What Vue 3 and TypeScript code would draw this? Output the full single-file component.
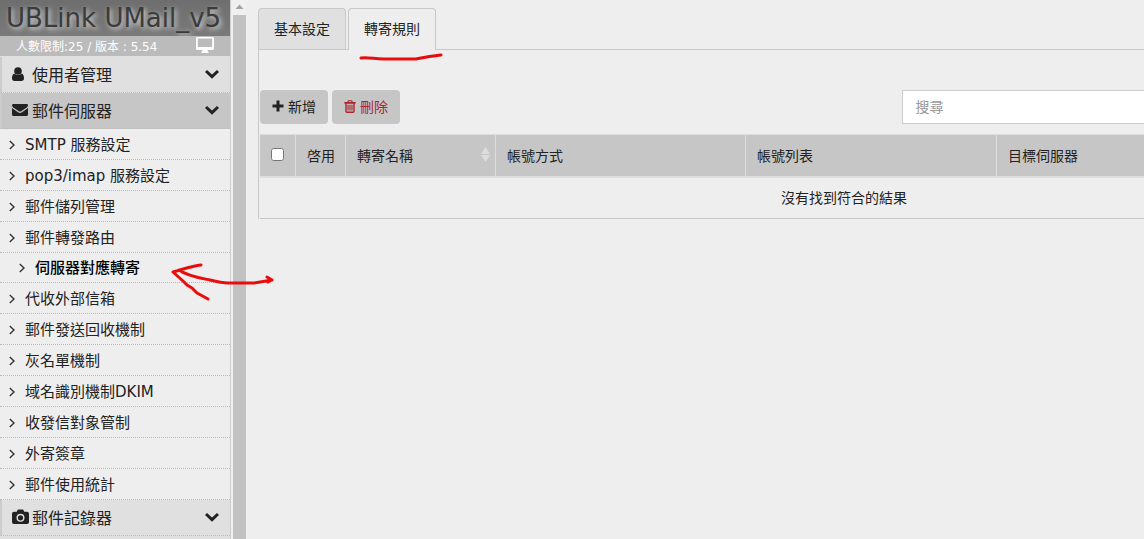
<script setup lang="ts">
import { ref } from 'vue'

interface Entry { label: string; child?: boolean }
interface Column { label: string; sortable?: boolean; cls: string }

const entries: Entry[] = [
  { label: 'SMTP 服務設定' },
  { label: 'pop3/imap 服務設定' },
  { label: '郵件儲列管理' },
  { label: '郵件轉發路由' },
  { label: '伺服器對應轉寄', child: true },
  { label: '代收外部信箱' },
  { label: '郵件發送回收機制' },
  { label: '灰名單機制' },
  { label: '域名識別機制DKIM' },
  { label: '收發信對象管制' },
  { label: '外寄簽章' },
  { label: '郵件使用統計' },
]

const columns: Column[] = [
  { label: '啓用', cls: 'c-on' },
  { label: '轉寄名稱', cls: 'c-name', sortable: true },
  { label: '帳號方式', cls: 'c-mode' },
  { label: '帳號列表', cls: 'c-list' },
  { label: '目標伺服器', cls: 'c-target' },
]

const tabs = ['基本設定', '轉寄規則']
const active = ref(1)
const keyword = ref('')
const allChecked = ref(false)
</script>

<template>
  <div class="page">
    <aside class="sidebar">
      <h1 class="brand">UBLink UMail_v5</h1>
      <div class="status">
        <span>人數限制:25 / 版本 : 5.54</span>
        <svg class="monitor" viewBox="0 0 18 16" aria-hidden="true">
          <path fill="#fff" fill-rule="evenodd" d="M1.500 0h15A1.500 1.500 0 0 1 18 1.500v10a1.500 1.500 0 0 1-1.500 1.500H11.500v1l1 .7V16h-7v-1.300l1-.7v-1h-5A1.500 1.500 0 0 1 0 11.500v-10A1.500 1.500 0 0 1 1.500 0zM1.800 1.600v8.400h14.400V1.600z" />
        </svg>
      </div>
      <nav class="nav">
        <button class="section" type="button">
          <svg class="sec-icon" viewBox="0 0 18 16" aria-hidden="true">
            <circle cx="6" cy="5" r="3.800" />
            <path d="M2.500 7.500C.7 8 0 9.800 0 12.200 0 14 1 15 2.500 15h7c1.500 0 2.500-1 2.500-2.800 0-2.400-.7-4.200-2.500-4.700-1 1-2.200 1.500-3.500 1.500S3.500 8.500 2.500 7.500z" />
          </svg>
          <span>使用者管理</span>
          <svg class="chevron" viewBox="0 0 14 10" aria-hidden="true"><path d="M1 2 7 7.700 13 2" /></svg>
        </button>
        <button class="section current" type="button">
          <svg class="sec-icon" viewBox="0 0 18 16" aria-hidden="true">
            <path d="M0 3.500C0 2.500.6 2 1.500 2h13c.9 0 1.500.5 1.500 1.400 0 .8-.6 1.500-1.300 2L9.500 9c-1 .7-2 .7-3 0L1.300 5.400C.6 4.900 0 4.200 0 3.500z" />
            <path d="M0 6 6 10.200c1.400.9 2.600.9 4 0L16 6v6.500c0 .9-.6 1.500-1.500 1.500h-13C.6 14 0 13.400 0 12.500z" />
          </svg>
          <span>郵件伺服器</span>
          <svg class="chevron" viewBox="0 0 14 10" aria-hidden="true"><path d="M1 2 7 7.700 13 2" /></svg>
        </button>
        <ul class="menu">
          <li v-for="e in entries" :key="e.label" :class="{ child: e.child }">
            <a href="#">
              <svg class="angle" viewBox="0 0 6 10" aria-hidden="true"><path d="M.8 1 5 5 .8 9" /></svg>
              <span>{{ e.label }}</span>
            </a>
          </li>
        </ul>
        <button class="section" type="button">
          <svg class="sec-icon" viewBox="0 0 18 16" aria-hidden="true">
            <path fill-rule="evenodd" d="M2 2.800h2.800l.6-1.600Q5.700.5 6.500.5h4q.8 0 1.100.7l.6 1.600H15a2 2 0 0 1 2 2V13a2 2 0 0 1-2 2H2a2 2 0 0 1-2-2V4.800a2 2 0 0 1 2-2zM8.500 4.800a4 4 0 1 0 0 8 4 4 0 0 0 0-8zm0 1.400a2.600 2.600 0 1 1 0 5.200 2.600 2.600 0 0 1 0-5.200z" />
          </svg>
          <span>郵件記錄器</span>
          <svg class="chevron" viewBox="0 0 14 10" aria-hidden="true"><path d="M1 2 7 7.700 13 2" /></svg>
        </button>
      </nav>
    </aside>

    <div class="scroll" aria-hidden="true">
      <svg viewBox="0 0 13 15"><path fill="#a3a3a3" d="M6.500 4.500 10.500 9h-8z" /></svg>
      <div class="thumb"></div>
    </div>

    <main class="main">
      <div class="tabs" role="tablist">
        <button v-for="(t, i) in tabs" :key="t" type="button" role="tab" class="tab" :class="{ active: i === active }" :aria-selected="i === active" @click="active = i">{{ t }}</button>
      </div>
      <section class="panel">
        <div class="toolbar">
          <button class="btn" type="button">
            <svg width="12" height="12" viewBox="0 0 12 12" aria-hidden="true"><path d="M4.500.5h3v4h4v3h-4v4h-3v-4h-4v-3h4z" /></svg>
            <span>新增</span>
          </button>
          <button class="btn danger" type="button">
            <svg width="12" height="13" viewBox="0 0 12 13" aria-hidden="true">
              <path fill-rule="evenodd" d="M4 .3h4l.8 1.700h2.900v1.500h-1V11c0 1-.6 1.900-1.500 1.900H2.800c-.9 0-1.500-.9-1.500-1.900V3.500h-1V2h2.900zM4.700 1.300l-.3.700h3.200l-.3-.7zM2.700 3.700v7.700h6.600V3.700zM3.500 4.800h1.100v5.600H3.500zM5.450 4.800h1.100v5.600h-1.100zM7.400 4.800h1.100v5.600H7.400z" />
            </svg>
            <span>刪除</span>
          </button>
          <input v-model="keyword" class="search" type="text" placeholder="搜尋" aria-label="搜尋">
        </div>
        <table class="grid">
          <thead>
            <tr>
              <th class="c-check"><input v-model="allChecked" type="checkbox" aria-label="全選"></th>
              <th v-for="c in columns" :key="c.label" :class="c.cls">
                <div class="th">
                  <span>{{ c.label }}</span>
                  <svg v-if="c.sortable" width="9" height="15" viewBox="0 0 9 15" aria-hidden="true"><path fill="#ddd" d="M4.500 0 9 7H0zM0 8h9l-4.500 7z" /></svg>
                </div>
              </th>
            </tr>
          </thead>
          <tbody>
            <tr><td :colspan="columns.length + 1">沒有找到符合的結果</td></tr>
          </tbody>
        </table>
      </section>
    </main>

    <svg class="mark underline" width="86" height="12" viewBox="0 0 86 12" aria-hidden="true">
      <path d="M3 6C10 5 17 7 25 7H58C66 5 76 4 83 3" />
    </svg>
    <svg class="mark arrow" width="106" height="42" viewBox="0 0 106 42" aria-hidden="true">
      <path d="M31 5C22 6 14 9 3 12L13 21 17 25 22 28 27 33 38 39M9 10C17 16 30 18 40 20 48 22 52 23 58 23H84C90 22 96 21 102 20M97 17 102 20 98 22" />
    </svg>
  </div>
</template>

<style>
body {
  background: #eee;
}
</style>

<style scoped>
.page {
  position: relative;
  display: flex;
  height: 100vh;
  overflow: hidden;
  color: #222;
  font-family: "DejaVu Sans", "Noto Sans CJK TC", sans-serif;
  font-size: 14px;
}
.page * {
  box-sizing: border-box;
}
button, input {
  font: inherit;
  color: inherit;
}
.sidebar {
  flex: 0 0 231px;
  display: flex;
  flex-direction: column;
  overflow: hidden;
  border-right: 1px solid #ccc;
}
.brand {
  flex: none;
  margin: 0;
  height: 36px;
  line-height: 36px;
  padding-left: 6px;
  background: linear-gradient(#6e6e6e, #7a7a7a);
  color: #3b3b3b;
  font-size: 26px;
  font-weight: 400;
  white-space: nowrap;
  text-shadow: 2px 2px 5px #ddd;
}
.status {
  flex: none;
  display: flex;
  align-items: center;
  justify-content: space-between;
  height: 20px;
  padding: 0 16px 2px 16px;
  background: #bbb;
  color: #fff;
  font-size: 12px;
}
.monitor {
  width: 18px;
  height: 16px;
}
.nav {
  flex: 1;
  padding-top: 1px;
  background: #e0e0e0;
}
.section {
  display: flex;
  align-items: center;
  width: 100%;
  height: 36px;
  padding: 0 11px 2px 10px;
  border: 0;
  border-left: 2px solid #ccc;
  border-bottom: 1px dotted #bbb;
  background: #e0e0e0;
  font-size: 16px;
  text-align: left;
}
.section.current {
  background: #c6c6c6;
}
.sec-icon {
  width: 18px;
  height: 16px;
  margin-right: 2px;
  fill: #222;
}
.chevron {
  width: 14px;
  height: 10px;
  margin-left: auto;
  fill: none;
  stroke: #222;
  stroke-width: 3;
}
.menu {
  margin: 0;
  padding: 0;
  background: #eee;
  list-style: none;
}
.menu a {
  display: flex;
  align-items: center;
  height: 31px;
  padding: 0 0 2px 9px;
  border-bottom: 1px dotted #bbb;
  color: #222;
  font-size: 15px;
  text-decoration: none;
}
.menu .child a {
  height: 30px;
  padding-left: 19px;
  color: #000;
  font-weight: 500;
}
.angle {
  width: 6px;
  height: 10px;
  margin: 3px 10px 0 0;
  fill: none;
  stroke: #333;
  stroke-width: 1.4;
}
.scroll {
  flex: 0 0 15px;
  display: flex;
  flex-direction: column;
  padding-left: 2px;
  background: #f0f0f0;
}
.scroll svg {
  height: 15px;
}
.thumb {
  flex: 1;
  background: #c1c1c1;
}
.main {
  flex: 1 0 1182px;
  padding: 8px 0 0 12px;
}
.tabs {
  display: flex;
  gap: 2px;
  border-bottom: 1px solid #c8c8c8;
}
.tab {
  height: 41px;
  padding: 0 15px 2px;
  border: 1px solid #c8c8c8;
  border-bottom: 0;
  border-radius: 4px 4px 0 0;
  background: #e0e0e0;
}
.tab.active {
  height: 42px;
  margin-bottom: -1px;
  padding-bottom: 3px;
  background: #eee;
}
.panel {
  padding: 40px 0 0 1px;
  border-left: 1px solid #c8c8c8;
}
.toolbar {
  display: flex;
  gap: 4px;
  height: 34px;
  margin-bottom: 10px;
}
.btn {
  display: flex;
  align-items: center;
  gap: 4px;
  padding: 0 12px 2px;
  border: 0;
  border-radius: 4px;
  background: #c6c6c6;
}
.btn svg {
  fill: #222;
}
.btn.danger {
  color: #a9252b;
}
.btn.danger svg {
  fill: #a9252b;
}
.search {
  width: 45%;
  margin-left: auto;
  padding: 0 12px;
  border: 1px solid #ccc;
  background: #fff;
  outline: 0;
}
.search::placeholder {
  color: #999;
  opacity: 1;
}
.grid {
  width: 100%;
  table-layout: fixed;
  border-collapse: separate;
  border-spacing: 0;
}
.grid th {
  height: 44px;
  padding: 0 5px 2px 11px;
  border-right: 1px solid #ddd;
  border-top: 1px solid #ddd;
  border-bottom: 2px solid #ddd;
  background: #c6c6c6;
  font-weight: 400;
  text-align: left;
}
.th {
  display: flex;
  align-items: center;
  justify-content: space-between;
}
.c-check { width: 36px; }
.c-on { width: 50px; }
.c-name { width: 150px; }
.c-mode { width: 250px; }
.c-list { width: 251px; }
.grid th input {
  display: block;
  width: 13px;
  height: 13px;
  margin: 0;
}
.grid td {
  height: 41px;
  padding: 0 0 2px;
  border-bottom: 1px solid #c8c8c8;
  text-align: center;
}
.mark {
  position: absolute;
  fill: none;
  stroke: #e80c0c;
  stroke-width: 3;
  stroke-linecap: round;
  stroke-linejoin: round;
}
.underline {
  left: 358px;
  top: 52px;
}
.arrow {
  left: 170px;
  top: 260px;
}
</style>
